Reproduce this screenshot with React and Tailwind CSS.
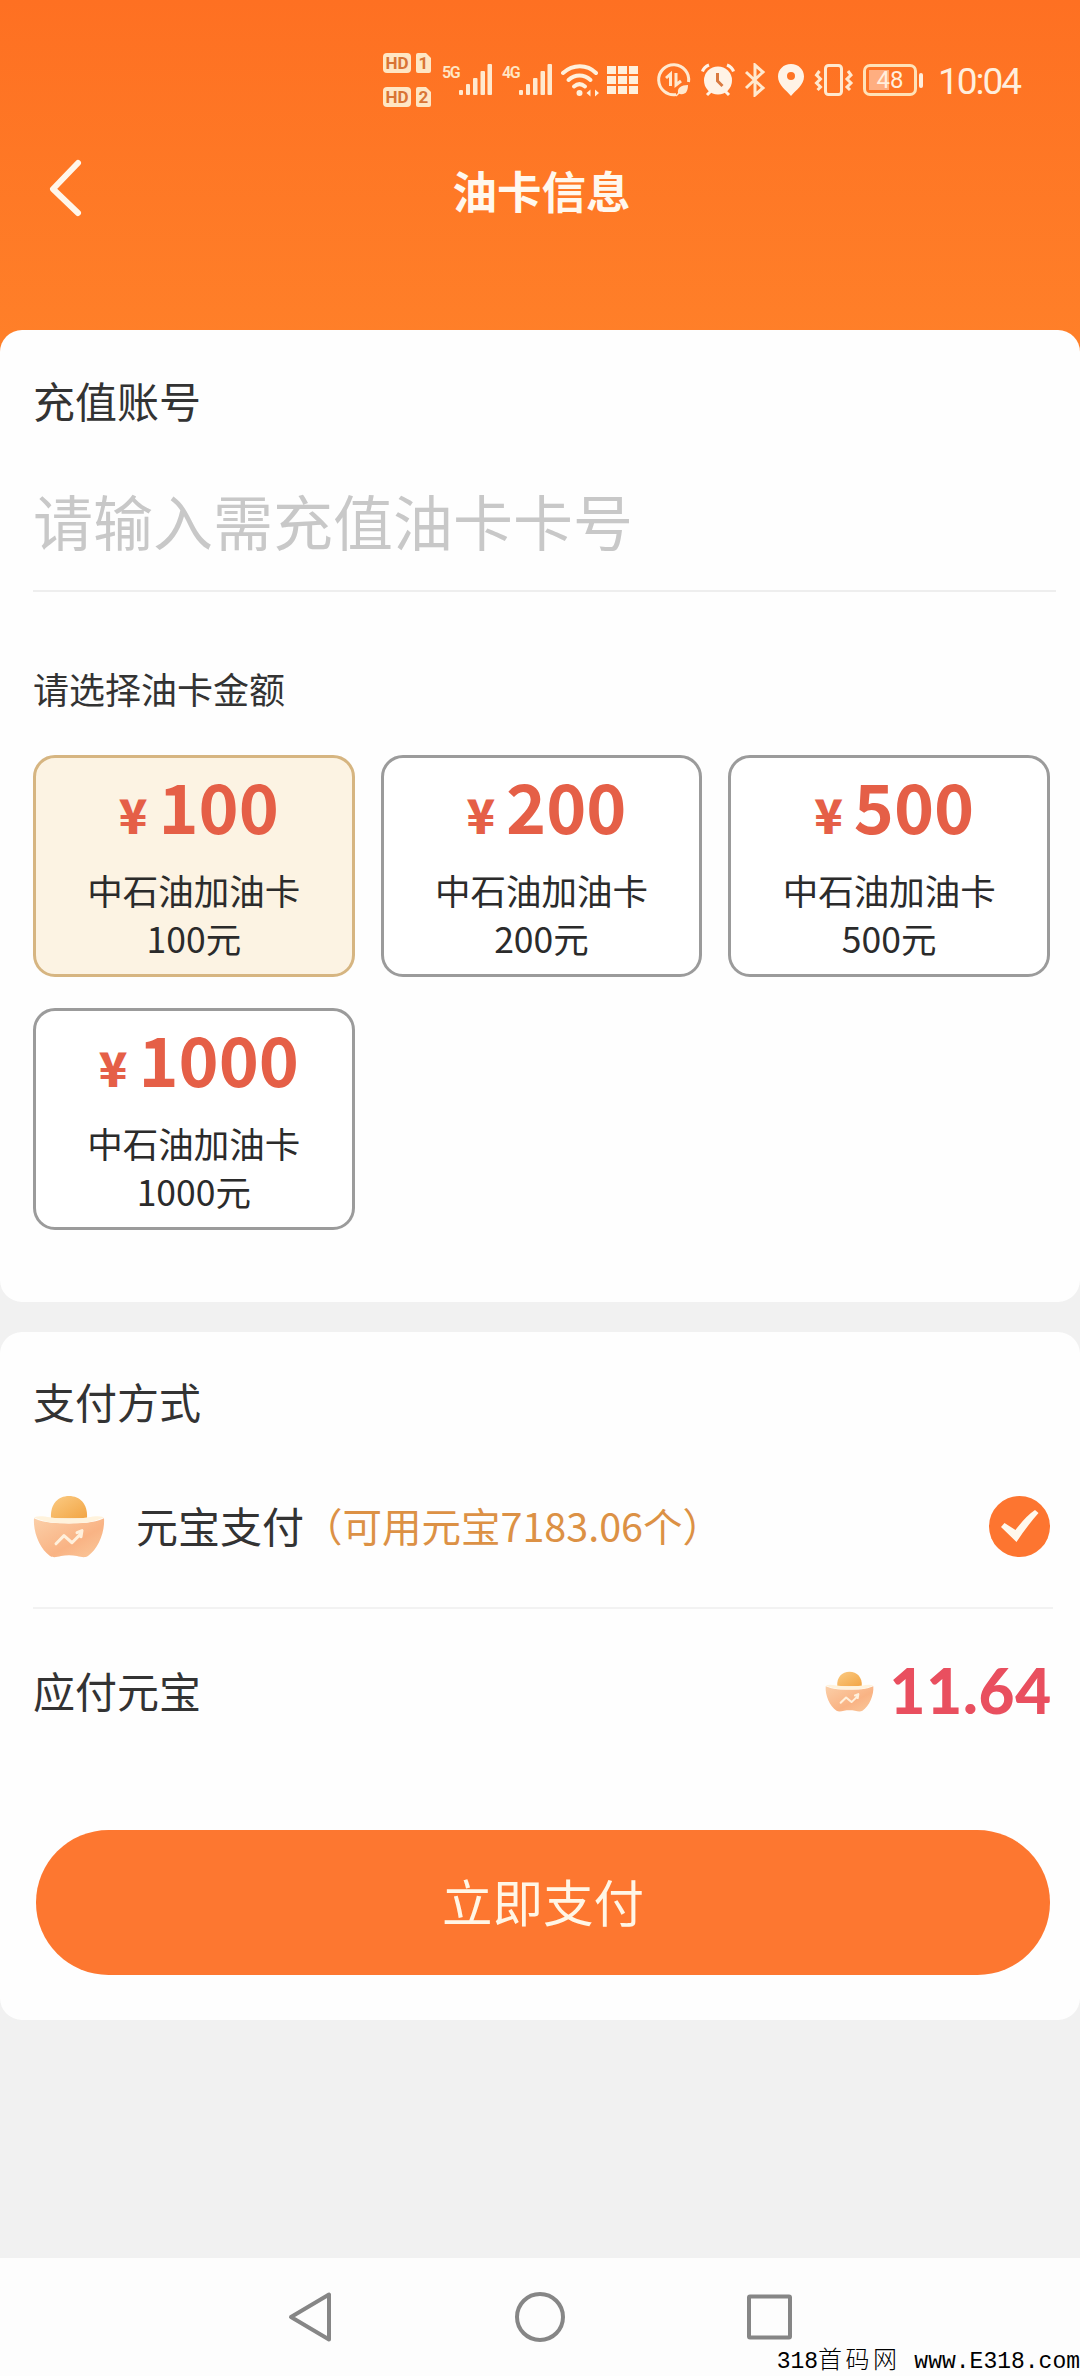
import { useState } from 'react';

const montos = [100, 200, 500, 1000];

// --- Iconos de la barra de estado ---

function SimBadge({ n }) {
    return (
        <div className="flex items-center gap-[5px] h-[20px]">
            <span className="w-[28px] h-[20px] rounded-[4px] bg-[#ffe6c4] text-[#d97435] text-[17px] leading-[21px] font-bold text-center">HD</span>
            <svg width="15" height="20" viewBox="0 0 15 20">
                <path d="M2 0h8l5 5v13a2 2 0 0 1-2 2H2a2 2 0 0 1-2-2V2a2 2 0 0 1 2-2z" fill="#ffe6c4" />
                <text x="7.5" y="16" textAnchor="middle" fontSize="17" fontWeight="700" fontFamily="Roboto, sans-serif" fill="#d97435">{n}</text>
            </svg>
        </div>
    );
}

function Signal({ label }) {
    return (
        <div className="flex items-start h-[32px]">
            <span className="w-[17px] text-[16px] leading-[17px] font-semibold tracking-[-1.5px] text-[#ffe6c4]">{label}</span>
            <svg width="33" height="32" viewBox="0 0 33 32" fill="#ffe9cf">
                <rect x="0" y="26" width="4" height="5" rx="1" />
                <rect x="7" y="20" width="4" height="11" rx="1" />
                <rect x="14" y="14" width="4.5" height="17" rx="1" />
                <rect x="21.5" y="7" width="4.5" height="24" rx="1" />
                <rect x="28.5" y="0" width="4.5" height="31" rx="1" />
            </svg>
        </div>
    );
}

function StatusBar() {
    return (
        <div className="flex items-center h-[160px] pl-[383px] text-[#ffeedd] font-[Roboto,sans-serif]">
            <div className="flex flex-col gap-[14px]">
                <SimBadge n="1" />
                <SimBadge n="2" />
            </div>
            <div className="ml-[11px]"><Signal label="5G" /></div>
            <div className="ml-[10px]"><Signal label="4G" /></div>
            <svg className="ml-[9px]" width="38" height="34" viewBox="0 0 38 34" fill="none" stroke="#fff0dc" strokeWidth="4" strokeLinecap="round">
                <path d="M2 10C12 1 26 1 35 10" />
                <path d="M7.5 17C14 11 23 11 29.5 17" />
                <path d="M13 23.5C16.5 20.5 20.5 20.5 24 23.5" />
                <circle cx="18.5" cy="30" r="1.5" strokeWidth="3" />
                <path d="M25.5 30l4-3.500v7zM38 30l-4-3.500v7z" fill="#fff0dc" stroke="none" />
            </svg>
            <svg className="ml-[7px]" width="33" height="30" viewBox="0 0 33 30" fill="#fff0dc">
                <path d="M1 1h9v8H1zM12 1h9v8h-9zM23 1h9v8h-9zM1 11h9v8H1zM12 11h9v8h-9zM23 11h9v8h-9zM1 21h9v8H1zM12 21h9v8h-9zM23 21h9v8h-9z" />
            </svg>
            <svg className="ml-[17px]" width="36" height="36" viewBox="0 0 36 36" fill="none" stroke="#ffe9cf" strokeWidth="3">
                <path d="M20 32.5A15 15 0 1 1 32.5 20" />
                <path d="M10 16l4.500-4v12M20 11v12l5-4" />
                <path d="M22 31c-1-5 3-8 10-8 0 7-3 10-8 9z" fill="#ffe9cf" stroke="none" />
                <path d="M20 34l7-7" strokeWidth="1.5" />
            </svg>
            <svg className="ml-[9px]" width="34" height="34" viewBox="0 0 34 34">
                <circle cx="17" cy="17.5" r="14" fill="#fff3e6" />
                <path d="M1.5 8.5Q3 4 8 2M32.5 8.5Q31 4 26 2M6 32l4-4M28 32l-4-4" stroke="#fff3e6" strokeWidth="3" fill="none" />
                <path d="M16.5 10v8l5 5" stroke="#d97a40" strokeWidth="3" fill="none" />
            </svg>
            <svg className="ml-[9px]" width="22" height="34" viewBox="0 0 22 34" fill="none" stroke="#ffe9cf" strokeWidth="3">
                <path d="M2 9l17 16-8 7V2l8 7L2 25" />
            </svg>
            <svg className="ml-[11px]" width="28" height="34" viewBox="0 0 28 34">
                <path d="M14 1C6.5 1 1 6.5 1 13.5 1 22 9 27 14 33c5-6 13-11 13-19.500C27 6.5 21.5 1 14 1zm0 8a4 4 0 1 1 0 8 4 4 0 0 1 0-8z" fill="#fff3e6" fillRule="evenodd" />
            </svg>
            <svg className="ml-[9px]" width="40" height="34" viewBox="0 0 40 34" fill="none" stroke="#ffe9cf" strokeWidth="3">
                <rect x="11.5" y="2.5" width="16" height="29" rx="3" />
                <path d="M5.5 8l-3 4 4 4-4 4 4 4-3 3M34 8l3 4-4 4 4 4-4 4 3 3" strokeWidth="3" />
            </svg>
            <div className="ml-[9px] w-[54px] h-[32px] rounded-[7px] border-[3px] border-[#ffe2b8] p-[3px]">
                <div className="h-full bg-linear-to-r from-[#ffae80] from-48% to-transparent to-48% text-[24px] leading-[21px] text-center text-[#ffeedd]">48</div>
            </div>
            <div className="ml-[2px] w-[4px] h-[15px] rounded-sm bg-[#ffeedd]"></div>
            <span className="ml-[15px] mt-[4px] text-[37px] leading-[40px] font-normal tracking-[-2px]">10:04</span>
        </div>
    );
}

// Lingote usado como moneda de pago
function Yuanbao({ className }) {
    return (
        <svg className={className} viewBox="0 0 72 62" preserveAspectRatio="none">
            <defs>
                <linearGradient id="bola" x1="0" y1="0" x2="1" y2="1">
                    <stop offset="0" stopColor="#fbcb84" />
                    <stop offset="1" stopColor="#f2a544" />
                </linearGradient>
                <linearGradient id="base" x1="0" y1="0" x2="1" y2="1">
                    <stop offset="0" stopColor="#fbcfa8" />
                    <stop offset=".6" stopColor="#f9b384" />
                    <stop offset="1" stopColor="#fac99c" />
                </linearGradient>
            </defs>
            <path d="M18 23C17 9 25 1 36 1s19 8 18 22z" fill="url(#bola)" />
            <path d="M1 23c11 5 23 5 35 5s24 0 35-5c1 14-6 30-16 37-3 2-7 1-11 0-5-1-11-1-16 0-4 1-8 2-11 0C7 53 0 37 1 23z" fill="url(#base)" />
            <path d="M1 22c5-2 10-1 16 0 13 2 25 2 38 0 6-1 11-2 16 0-10 5-20 6-35 6S11 27 1 22z" fill="#fff3dd" />
            <path d="M23 48l8-8 8 7 9-9M44 37l5-2-1 6" fill="none" stroke="#fff0dc" strokeWidth="3" strokeLinecap="round" strokeLinejoin="round" />
        </svg>
    );
}

function MontoCard({ monto, activo, onClick }) {
    return (
        <button
            type="button"
            onClick={onClick}
            className={`h-[222px] rounded-[22px] border-[3px] flex flex-col items-center ${activo ? 'bg-[#fcf3e3] border-[#d6b581]' : 'bg-white border-[#9b9b9b]'}`}
        >
            <span className="h-[108px] pt-[2px] pl-[10px] flex items-baseline gap-[11px] font-bold text-[#e55f47]">
                <span className="text-[47px] leading-[90px] font-black">¥</span>
                <span className="text-[68px] leading-[90px]">{monto}</span>
            </span>
            <span className="w-[240px] text-[35.5px] leading-[48px] text-[#2b2b2b]">
                中石油加油卡
                <br />
                {monto}元
            </span>
        </button>
    );
}

export default function App() {
    const [cuenta, setCuenta] = useState('');
    const [seleccion, setSeleccion] = useState(100);

    return (
        <div className="relative w-[1080px] h-[2376px] overflow-hidden flex flex-col bg-[#f1f1f1] text-[#333] font-['Noto_Sans_CJK_SC',sans-serif]">
            {/* Cabecera */}
            <header className="h-[356px] shrink-0 bg-linear-to-b from-[#fe7022] to-[#ff8029]">
                <StatusBar />
                <div className="grid grid-cols-3 items-center h-[60px]">
                    <svg className="ml-[48px] -mt-[6px]" width="34" height="60" viewBox="0 0 34 60" fill="none" stroke="#fff6ea" strokeWidth="6" strokeLinecap="round" strokeLinejoin="round">
                        <path d="M30 6L5 32l25 24" />
                    </svg>
                    <h1 className="pl-[3px] text-center text-[44.5px] leading-[60px] font-bold text-[#fff8ee] whitespace-nowrap">油卡信息</h1>
                </div>
            </header>

            {/* Cuenta e importe */}
            <section className="-mt-[26px] h-[972px] shrink-0 bg-[#fefefe] rounded-[22px] px-[33px] pt-[40px]">
                <h2 className="text-[42px] leading-[60px]">充值账号</h2>
                <input
                    value={cuenta}
                    onChange={(e) => setCuenta(e.target.value)}
                    placeholder="请输入需充值油卡卡号"
                    className="mt-[27px] h-[135px] w-[1023px] pb-[9px] text-[60px] outline-none border-b-2 border-[#eeeeee] placeholder:text-[#c8c8c8]"
                />
                <p className="mt-[71px] text-[36px] leading-[50px]">请选择油卡金额</p>
                <div className="mt-[42px] w-[1017px] grid grid-cols-3 gap-x-[26px] gap-y-[31px]">
                    {montos.map((m) => (
                        <MontoCard key={m} monto={m} activo={m === seleccion} onClick={() => setSeleccion(m)} />
                    ))}
                </div>
            </section>

            {/* Forma de pago */}
            <section className="mt-[30px] h-[688px] shrink-0 bg-[#fefefe] rounded-[22px] px-[33px] pt-[39px]">
                <h2 className="text-[42px] leading-[60px]">支付方式</h2>
                <div className="mt-[19px] h-[159px] w-[1020px] pr-[3px] pb-[4px] flex items-center border-b-2 border-[#f2f2f2]">
                    <Yuanbao className="w-[72px] h-[63px]" />
                    <span className="-mt-[3px] ml-[31px] text-[42px] leading-[60px]">元宝支付</span>
                    <span className="-mt-[3px] -ml-[1px] text-[39.5px] leading-[60px] text-[#dc9145]">（可用元宝7183.06个）</span>
                    <svg className="ml-auto" width="61" height="61" viewBox="0 0 61 61">
                        <circle cx="30.5" cy="30.5" r="30.5" fill="#fd7530" />
                        <path d="M12 31l3.500-4 11 7Q37 20 46 14l3.500 3Q38 30 27.500 46z" fill="#fff8ec" />
                    </svg>
                </div>
                <div className="mt-[46px] h-[70px] flex items-center">
                    <span className="text-[42px] leading-[60px]">应付元宝</span>
                    <Yuanbao className="ml-auto mt-[3px] w-[49px] h-[41px]" />
                    <span className="ml-[15px] -mr-[5px] text-[62px] leading-[60px] font-black tracking-[0.8px] text-[#e94f5f] font-[Lato,sans-serif]">11.64</span>
                </div>
                <button type="button" className="mt-[105px] ml-[3px] w-[1014px] h-[145px] pb-[4px] rounded-full bg-[#fd7730] text-[50.5px] text-[#fff6e6]">
                    立即支付
                </button>
            </section>

            {/* Barra de navegación del sistema */}
            <nav className="mt-auto h-[118px] shrink-0 bg-[#fdfdfd] flex items-start pt-[33px] pl-[287px]">
                <svg width="46" height="52" viewBox="0 0 46 52" fill="none" stroke="#868686" strokeWidth="4" strokeLinejoin="round">
                    <path d="M42 3.5v45L4 26z" />
                </svg>
                <svg className="ml-[181px]" width="52" height="52" viewBox="0 0 52 52" fill="none" stroke="#868686" strokeWidth="4">
                    <circle cx="26" cy="26" r="23" />
                </svg>
                <svg className="ml-[178px]" width="52" height="52" viewBox="0 0 52 52" fill="none" stroke="#868686" strokeWidth="4" strokeLinejoin="round">
                    <rect x="5" y="5.5" width="41" height="41" rx="1" />
                </svg>
            </nav>
            <div className="absolute right-0 bottom-0 h-[28px] flex items-center text-[23px] leading-[28px] text-black whitespace-pre font-['Liberation_Mono','Noto_Sans_CJK_SC',monospace]">
                318<span className="text-[24px] tracking-[3.5px] font-light">首码网</span> www.E318.com
            </div>
        </div>
    );
}
